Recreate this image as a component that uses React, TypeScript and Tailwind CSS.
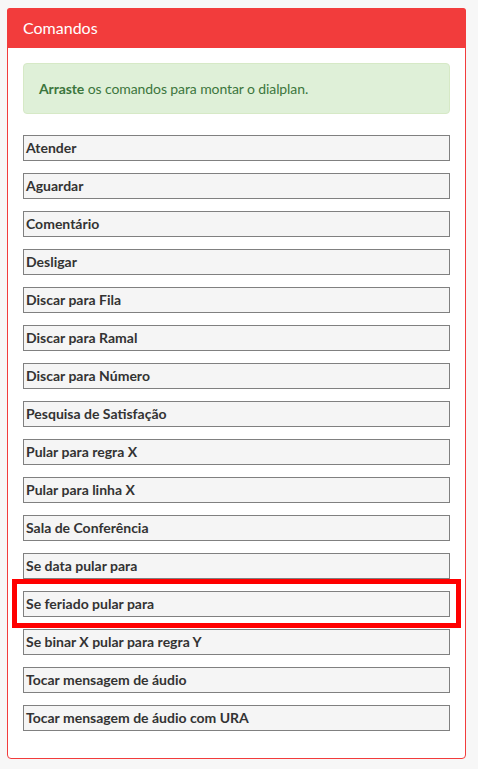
import React from "react";

const items = [
  "Atender",
  "Aguardar",
  "Comentário",
  "Desligar",
  "Discar para Fila",
  "Discar para Ramal",
  "Discar para Número",
  "Pesquisa de Satisfação",
  "Pular para regra X",
  "Pular para linha X",
  "Sala de Conferência",
  "Se data pular para",
  "Se feriado pular para",
  "Se binar X pular para regra Y",
  "Tocar mensagem de áudio",
  "Tocar mensagem de áudio com URA",
];

export default function App() {
  return (
    <div
      className="min-h-[769px] w-[478px] bg-[#f7f7f7] pt-[8px] pl-[7px]"
      style={{ fontFamily: "Lato, 'Noto Sans', sans-serif" }}
    >
      <div className="relative w-[459px] h-[751px] rounded-[4px] border border-[#f23c3c] bg-white overflow-visible">
        <div className="h-[40px] bg-[#f23c3c] rounded-t-[3px] flex items-center px-[15px] -mt-px -mx-px">
          <span className="text-white text-[16px] leading-none pl-px">Comandos</span>
        </div>
        <div className="px-[15px] pt-[15px]">
          <div className="h-[51px] rounded-[4px] border border-[#d6e9c6] bg-[#dff0d8] text-[#3c763d] text-[14px] tracking-[-0.1px] flex items-center px-[15px]">
            <span>
              <b className="font-bold">Arraste</b> os comandos para montar o dialplan.
            </span>
          </div>
          <div className="mt-[21px] flex flex-col gap-[12px]">
            {items.map((t) => (
              <div
                key={t}
                className="h-[26px] border border-[#808080] bg-[#f5f5f5] flex items-center pl-[2px] text-[14px] font-bold text-[#333333] leading-none"
              >
                {t}
              </div>
            ))}
          </div>
        </div>
        <div className="absolute left-[4px] top-[570px] w-[449px] h-[49px] border-[5px] border-[#ff0000] pointer-events-none" />
      </div>
    </div>
  );
}
